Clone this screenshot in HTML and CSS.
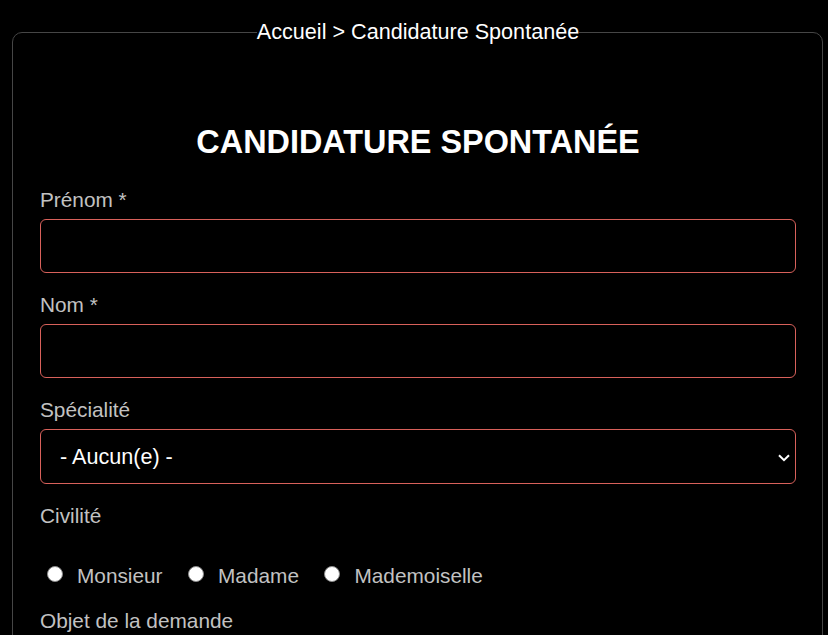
FILE: index.html
```html
<!DOCTYPE html>
<html lang="fr">
<head>
<meta charset="utf-8">
<title>Candidature Spontanée</title>
<link rel="stylesheet" href="styles.css">
</head>
<body>
<fieldset class="frame">
  <legend class="crumb">Accueil &gt; Candidature Spontanée</legend>
  <h1 class="title">CANDIDATURE SPONTANÉE</h1>
  <form class="form">
    <label class="field-label" for="prenom">Prénom *</label>
    <input class="field" id="prenom" type="text">
    <label class="field-label" for="nom">Nom *</label>
    <input class="field" id="nom" type="text">
    <label class="field-label" for="spec">Spécialité</label>
    <div class="select-wrap">
      <select class="field select" id="spec">
        <option>- Aucun(e) -</option>
      </select>
      <svg class="chevron" width="12" height="8" viewBox="0 0 12 8"><path d="M1 1.2 L6 6.2 L11 1.2" fill="none" stroke="#fff" stroke-width="2"/></svg>
    </div>
    <span class="field-label">Civilité</span>
    <div class="radios">
      <label class="opt"><input type="radio" name="civ" class="radio"><span>Monsieur</span></label>
      <label class="opt"><input type="radio" name="civ" class="radio"><span>Madame</span></label>
      <label class="opt"><input type="radio" name="civ" class="radio"><span>Mademoiselle</span></label>
    </div>
    <span class="field-label">Objet de la demande</span>
  </form>
</fieldset>
</body>
</html>
```
FILE: styles.css
```css
html, body {
  margin: 0;
  padding: 0;
  background: #000;
  height: 100%;
  overflow: hidden;
}
body {
  font-family: "Liberation Sans", Arial, sans-serif;
  color: #fff;
}
.frame {
  margin: 20px 5px 0 12px;
  padding: 0 26px 20px 27px;
  border: 1px solid #464646;
  border-radius: 10px;
  min-height: 700px;
  box-sizing: border-box;
}
.crumb {
  margin: 0 auto;
  padding: 0;
  font-size: 21.6px;
  line-height: 24px;
  color: #fff;
}
.title {
  margin: 81px 0 0;
  text-align: center;
  font-size: 32.4px;
  line-height: 35px;
  font-weight: bold;
  color: #fff;
}
.form {
  display: flex;
  flex-direction: column;
  margin-top: 28px;
}
.field-label {
  display: block;
  font-size: 20.8px;
  line-height: 23px;
  color: #c2c2c2;
  margin-bottom: 8px;
}
.field {
  box-sizing: border-box;
  width: 100%;
  height: 54px;
  margin: 0 0 20px;
  background: #000;
  border: 1px solid #d8615b;
  border-radius: 6px;
  color: #fff;
  font-family: inherit;
  font-size: 21.6px;
  padding: 0 19px;
  outline: none;
}
.select-wrap {
  position: relative;
}
.select {
  appearance: none;
  -webkit-appearance: none;
  height: 55px;
  margin-bottom: 20px;
}
.chevron {
  position: absolute;
  right: 6px;
  top: 25px;
  pointer-events: none;
}
.radios {
  display: flex;
  gap: 18.5px;
  margin: 29px 0 22px;
  font-size: 20.8px;
  line-height: 23px;
  color: #c2c2c2;
}
.opt {
  display: flex;
  align-items: center;
  gap: 14px;
}
.radio {
  appearance: none;
  -webkit-appearance: none;
  width: 16px;
  height: 16px;
  margin: 0 0 3px 7px;
  border-radius: 50%;
  background: #fff;
  border: 1px solid #8a8a8a;
  box-sizing: border-box;
}
```
